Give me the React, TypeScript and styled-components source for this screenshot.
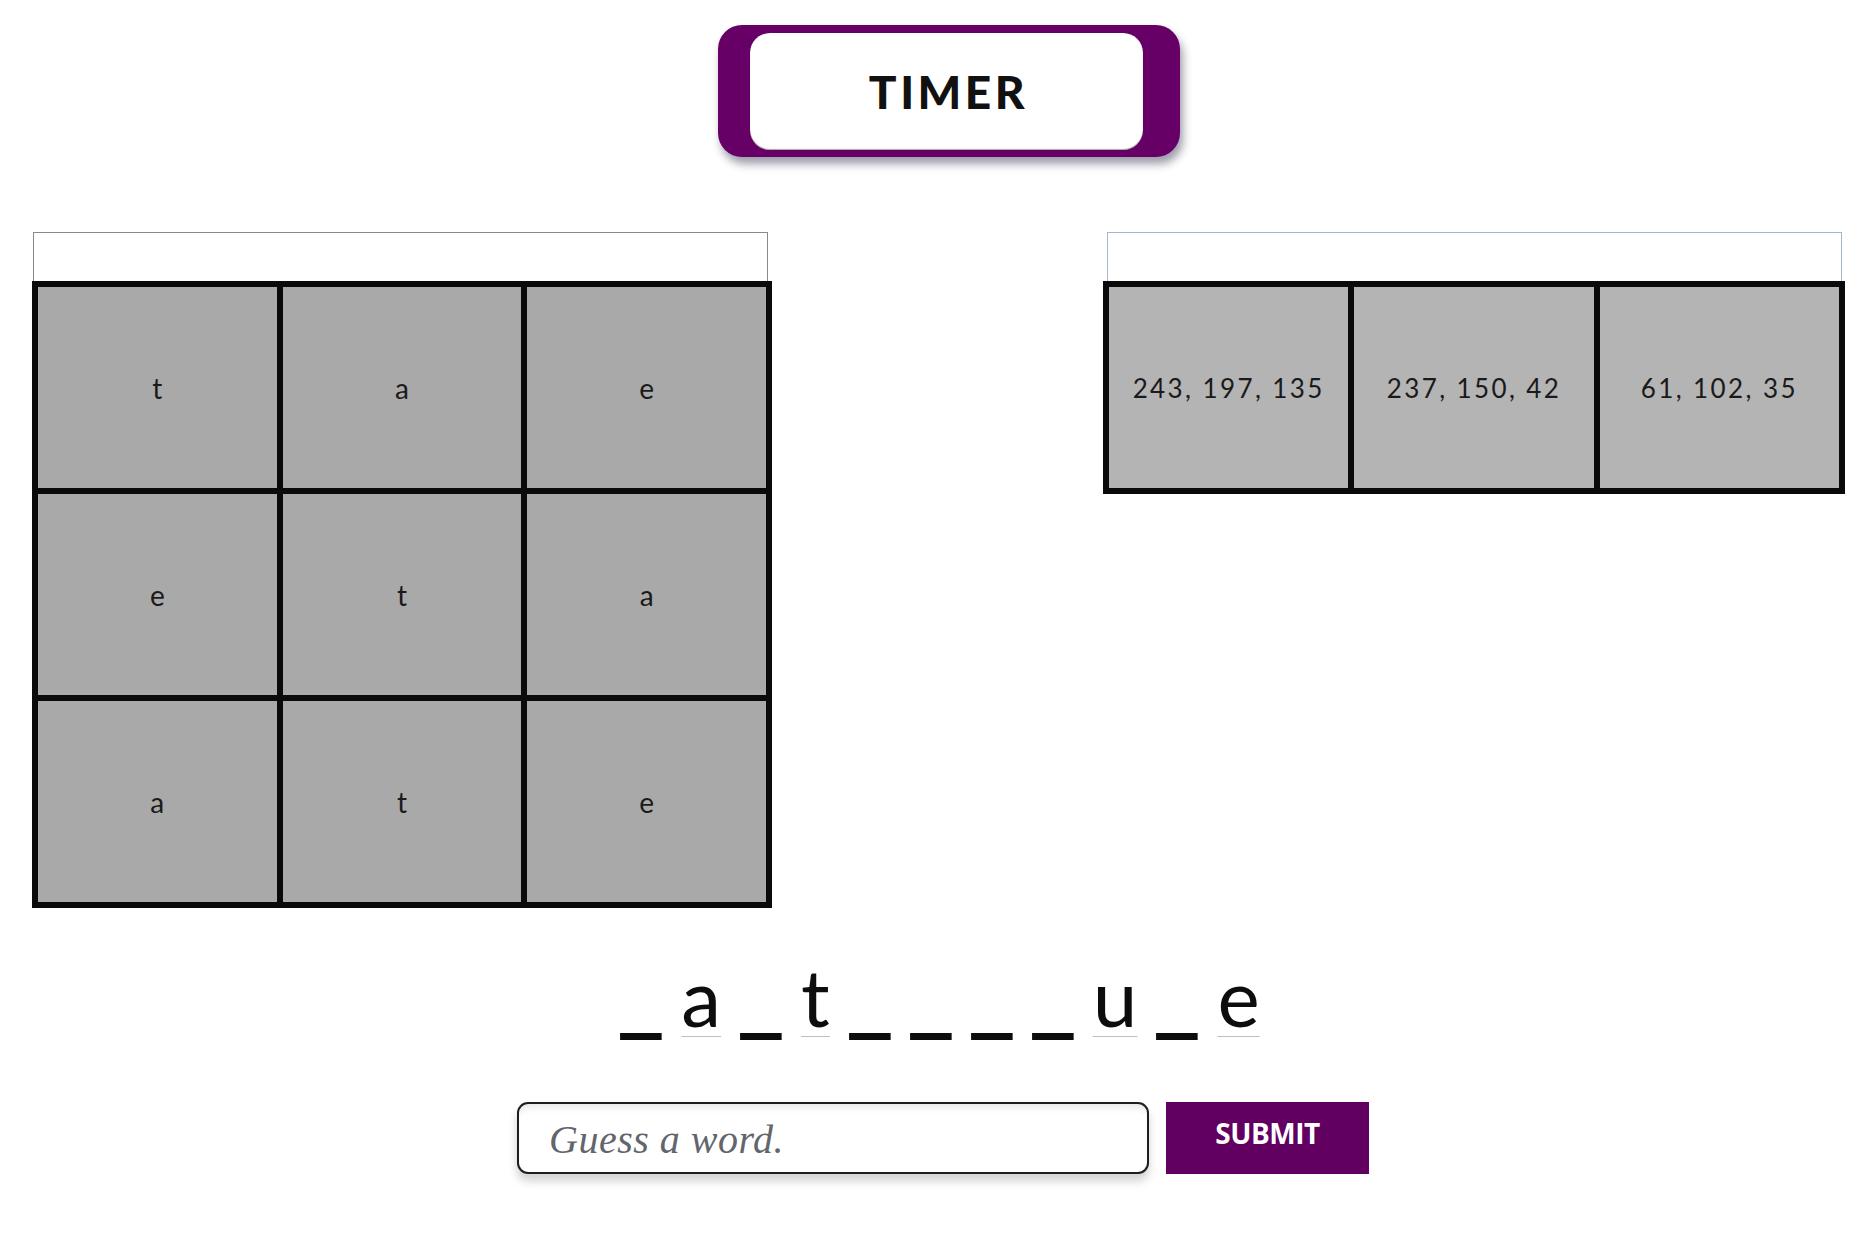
import React from "react";
import styled, { createGlobalStyle } from "styled-components";

const GlobalStyle = createGlobalStyle`
  html, body {
    margin: 0;
    padding: 0;
    background: #ffffff;
    font-family: Lato, "Open Sans", sans-serif;
  }
  * { box-sizing: border-box; }
`;

const Page = styled.div`
  width: 1875px;
  min-height: 1250px;
  display: flex;
  flex-direction: column;
  background: #fff;
`;

const TimerRow = styled.div`
  display: flex;
  justify-content: center;
  padding: 25px 0 0 23px;
`;

const TimerFrame = styled.div`
  width: 462px;
  height: 132px;
  padding: 8px 37px 7px 32px;
  background: #660066;
  border-radius: 24px;
  box-shadow: 3px 7px 9px rgba(40, 40, 70, 0.45);
`;

const TimerFace = styled.div`
  height: 100%;
  background: #ffffff;
  border-radius: 20px;
  display: flex;
  align-items: center;
  justify-content: center;
  font-family: Lato, "Open Sans", sans-serif;
  font-weight: 900;
  font-size: 46px;
  letter-spacing: 3.5px;
  padding-left: 4px;
  color: #111;
  box-shadow: inset 0 -1px 1px rgba(0, 0, 0, 0.35);
`;

const BoardsRow = styled.div`
  display: flex;
  justify-content: space-between;
  align-items: flex-start;
  margin-top: 75px;
  padding: 0 30px 0 32px;
`;

const Panel = styled.div<{ $width: number }>`
  width: ${(p) => p.$width}px;
  display: flex;
  flex-direction: column;
`;

const PanelHeader = styled.div<{ $line: string; $inset: string }>`
  height: 50px;
  margin: ${(p) => p.$inset};
  margin-bottom: -1px;
  border: 1px solid ${(p) => p.$line};
  border-bottom: none;
  background: #fff;
`;

const Grid = styled.div`
  display: grid;
  grid-template-columns: repeat(3, 1fr);
  grid-auto-rows: 201px;
  gap: 6px;
  padding: 6px;
  background: #0a0a0a;
`;

const Cell = styled.div<{ $bg: string }>`
  background: ${(p) => p.$bg};
  display: flex;
  align-items: center;
  justify-content: center;
  color: #1a1a1a;
  font-family: Lato, "Open Sans", sans-serif;
`;

const LetterText = styled.span`
  font-size: 28px;
`;

const NumberText = styled.span`
  font-size: 26px;
  letter-spacing: 2.4px;
`;

const WordRow = styled.div`
  display: flex;
  justify-content: center;
  align-items: baseline;
  gap: 19px;
  height: 84px;
  margin-top: 41px;
  padding-left: 5px;
  font-family: Lato, "Open Sans", sans-serif;
  line-height: 1;
  color: #0d0d0d;
`;

const Blank = styled.span`
  display: inline-block;
  width: 42px;
  font-size: 88px;
  font-weight: 700;
  line-height: 1;
  text-align: center;
  white-space: nowrap;
  transform: scaleX(1.2);
`;

const Letter = styled.span`
  display: inline-block;
  font-size: 80px;
  line-height: 1;
  text-decoration: underline;
  text-decoration-color: #bdbdbd;
  text-decoration-thickness: 1px;
  text-underline-offset: 9px;
`;

const GuessRow = styled.div`
  display: flex;
  justify-content: center;
  gap: 17px;
  margin-top: 69px;
  padding-left: 11px;
`;

const GuessInput = styled.input`
  width: 632px;
  height: 72px;
  border: 2px solid #1e1e1e;
  border-radius: 11px;
  padding: 2px 0 0 30px;
  font-family: "Liberation Serif", "DejaVu Serif", serif;
  font-style: italic;
  font-size: 40px;
  letter-spacing: 0.5px;
  color: #333;
  background: #fff;
  outline: none;
  box-shadow: inset 0 8px 10px -6px rgba(0, 0, 0, 0.12), 0 7px 10px rgba(0, 0, 0, 0.18);
  &::placeholder {
    color: #62666c;
  }
`;

const SubmitButton = styled.button`
  width: 203px;
  height: 72px;
  border: none;
  background: #610061;
  color: #ffffff;
  font-family: "Open Sans", Lato, sans-serif;
  font-weight: 700;
  font-size: 28px;
  letter-spacing: -0.5px;
  padding: 0 0 10px 0;
  cursor: pointer;
`;

const letters = ["t", "a", "e", "e", "t", "a", "a", "t", "e"];
const colors = ["243, 197, 135", "237, 150, 42", "61, 102, 35"];
const word = ["_", "a", "_", "t", "_", "_", "_", "_", "u", "_", "e"];

export default function App() {
  return (
    <Page>
      <GlobalStyle />
      <TimerRow>
        <TimerFrame>
          <TimerFace>TIMER</TimerFace>
        </TimerFrame>
      </TimerRow>

      <BoardsRow>
        <Panel $width={740}>
          <PanelHeader $line="#8a8a8a" $inset="0 4px 0 1px" />
          <Grid>
            {letters.map((l, i) => (
              <Cell key={i} $bg="#a9a9a9">
                <LetterText>{l}</LetterText>
              </Cell>
            ))}
          </Grid>
        </Panel>
        <Panel $width={742}>
          <PanelHeader $line="#a3b6ca" $inset="0 3px 0 4px" />
          <Grid>
            {colors.map((c, i) => (
              <Cell key={i} $bg="#b4b4b4">
                <NumberText>{c}</NumberText>
              </Cell>
            ))}
          </Grid>
        </Panel>
      </BoardsRow>

      <WordRow>
        {word.map((ch, i) =>
          ch === "_" ? <Blank key={i}>_</Blank> : <Letter key={i}>{ch}</Letter>
        )}
      </WordRow>

      <GuessRow>
        <GuessInput placeholder="Guess a word." />
        <SubmitButton>SUBMIT</SubmitButton>
      </GuessRow>
    </Page>
  );
}
